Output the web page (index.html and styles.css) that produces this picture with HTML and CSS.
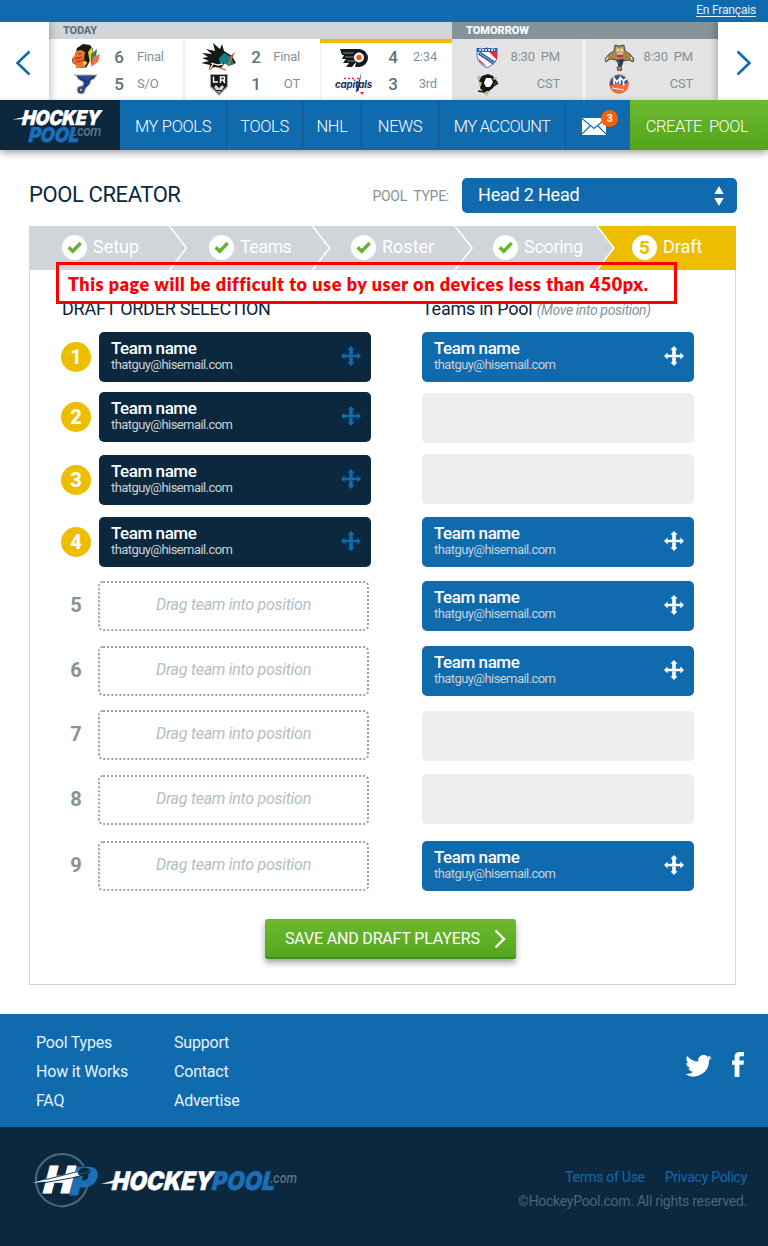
FILE: index.html
```html
<!DOCTYPE html>
<html lang="en">
<head>
<meta charset="utf-8">
<title>Pool Creator - HockeyPool.com</title>
<link rel="stylesheet" href="styles.css">
</head>
<body>
<svg class="defs" width="0" height="0">
  <symbol id="move" viewBox="0 0 20 20">
    <path d="M10 0l3.600 3.800h-1.800V9H8.200V3.800H6.400zM10 20l3.600-3.800h-1.800V11H8.200v5.200H6.400zM0 10l3.600-3.400v2.100h12.800V6.600L20 10l-3.600 3.400v-2.100H3.600v2.100z" fill="currentColor"/>
  </symbol>
  <symbol id="check" viewBox="0 0 25 25">
    <circle cx="12.500" cy="12.500" r="12.500" fill="#fff"/>
    <path d="M6.700 12.300l4 4 8-8.300" fill="none" stroke="#62b52c" stroke-width="3.400"/>
  </symbol>
</svg>

<div class="topbar"><a class="lang">En Français</a></div>

<section class="ticker">
  <div class="arrow arrow-left"><svg width="16" height="26" viewBox="0 0 16 26"><path d="M14.500 1.500L2.500 13l12 11.500" fill="none" stroke="#0f6aae" stroke-width="2.600"/></svg></div>
  <div class="day today">
    <h2>TODAY</h2>
    <div class="games">
      <div class="game g1">
        <div class="line">
          <svg class="team" viewBox="0 0 34 28"><path d="M9 5l6-4 7 1 3 4-2 10-5 9H9l-1-3-3-2-1-3 3-5z" fill="#171a16"/><path d="M8 8l5-1 4 2-1 7 2 9H8v-4l-4-1 1-3-1-2 3-3z" fill="#e37b28"/><path d="M20 9l4-5 1 8-3 8z" fill="#f1cc35"/><path d="M23 11l6-5-1 8-5 8z" fill="#2e8550"/><path d="M25 14l7-3-2 8-7 5z" fill="#ec7154"/><path d="M7 16l7-2M8 19l8-2M10 11h3" stroke="#d92d27" stroke-width="1.400"/><circle cx="17" cy="20" r="2" fill="#f3c635"/></svg>
          <b>6</b><span>Final</span>
        </div>
        <div class="line">
          <svg class="team" viewBox="0 0 34 28"><path d="M6 5h23l-3 4-3 1-1 4-4 4-1 2a4 4 0 1 1-4-4l3-1-1-3-5-3-1-3z" fill="#2c4598" stroke="#b8b08c" stroke-width="1"/><path d="M9 6l10 6 8-6M15 14l4 2" stroke="#162a67" fill="none"/><circle cx="13" cy="20" r="1.200" fill="#d6b456"/></svg>
          <b>5</b><span>S/O</span>
        </div>
      </div>
      <div class="game g2">
        <div class="line">
          <svg class="team" viewBox="0 0 34 28"><path d="M0 10l10 1-6-5 9 2-2-8 7 6 2-5 2 7 8 5 4 7-5 2-6-2-4 5-6-1-6 2 1-4-9-2 8-2-7-3 6-1z" fill="#14191b"/><path d="M17 15l5-5 7 4 3 7-5 2-5-3-4 0z" fill="#128087"/><path d="M33 9l-5 12-3 3 4-12z" fill="#bc6b34"/><path d="M9 20l7 2 5-1M8 26l3-5" stroke="#fff" stroke-width="1.300" fill="none"/><path d="M7 27l4-3M18 25l6 2" stroke="#e07832" stroke-width="1.500" fill="none"/></svg>
          <b>2</b><span>Final</span>
        </div>
        <div class="line">
          <svg class="team" viewBox="0 0 34 28"><path d="M8 4h18v13l-9 9-9-9z" fill="#a6abad"/><path d="M9 5h16v11l-8 8-8-8z" fill="#171819"/><path d="M11.500 6.500V12H16M18.500 13V7h4v3h-4M21 10l2 3" stroke="#fff" fill="none" stroke-width="1.400"/><path d="M12 17l2-2 3 3 3-3 2 2-2 3h-6zM15 21h4l-2 2z" fill="#d2d4d5"/></svg>
          <b>1</b><span>OT</span>
        </div>
      </div>
      <div class="game g3 live">
        <div class="line">
          <svg class="team" viewBox="0 0 34 28"><path d="M3 6h19a9 9 0 0 1 0 18h-4l1-5-4 5H9l3-4H6l3-4H5l2-4H5z" fill="#15181b"/><path d="M6 10h11M8 14h9M10 18h8" stroke="#84909a" stroke-width=".9"/><circle cx="22" cy="14.500" r="5" fill="#fff"/><circle cx="22" cy="14.500" r="2.700" fill="#f15a22"/></svg>
          <b>4</b><span>2:34</span>
        </div>
        <div class="line">
          <svg class="team wide" viewBox="0 0 38 28"><text x="0" y="18" textLength="37" lengthAdjust="spacingAndGlyphs" class="caps-mark">capitals</text><path d="M26.500 2l-6 20 3-1z" fill="#1d315c"/><path d="M9 8.500h2M13 8.500h2M17 8.500h2M22 8.500h2" stroke="#dc2741" stroke-width="1.700"/><path d="M25 22h4l-2 3z" fill="#dc2741"/></svg>
          <b>3</b><span>3rd</span>
        </div>
      </div>
    </div>
  </div>
  <div class="day tomorrow">
    <h2>TOMORROW</h2>
    <div class="games">
      <div class="game g4">
        <div class="line">
          <svg class="team" viewBox="0 0 34 28"><path d="M6 4l5 1 6-1 6 1 5-1v8c0 7-4 10-11 14C10 22 6 18 6 12z" fill="#2c5bb4" stroke="#f4f4f4"/><path d="M7.500 9h19v4c0 5-3 8-9.500 11.500C10 21 7.500 18 7.500 13z" fill="#fff"/><path d="M19 9h8v8z" fill="#e02c45"/><path d="M8 15l9 9-5-3-3-3z" fill="#d82d45"/><path d="M9 10l15 10" stroke="#2c5bb4" stroke-width="3.800"/><path d="M10 10.500l14 9.500" stroke="#dfe8f6" stroke-width="1" stroke-dasharray="1.500 1"/><path d="M9 7h16" stroke="#fff" stroke-width="1.500" stroke-dasharray="2 1"/></svg>
          <span>8:30&nbsp; PM</span>
        </div>
        <div class="line">
          <svg class="team" viewBox="0 0 34 28"><path d="M7 6l15 1 6 6-6 3-5 10-6-5z" fill="#c8b78b"/><path d="M12 6l6-2 5 2 2 3 3 3-4 2-1 4-4 3-6 0-3-3 2-5-3-2z" fill="#151719"/><path d="M16 8l5 0 2 4-3 5-4 0-2-4z" fill="#fff"/><path d="M8 21l6 1 14-9" stroke="#151719" stroke-width="1.600" fill="none"/><path d="M23 9l4-1" stroke="#d7bb70" stroke-width="1.500"/></svg>
          <span>CST</span>
        </div>
      </div>
      <div class="game g5">
        <div class="line">
          <svg class="team" viewBox="0 0 34 28"><path d="M13 2l4 1 5-1 1 6 5 3 4 5-1 3-4-2-6 1-1 4-1 2 1 3-4 1-1-3 2-3-3-5-6-1-4 3-1-3 4-5 5-3z" fill="#a78546" stroke="#273653" stroke-width=".8"/><path d="M14 4l3 1 4-1 1 5-4 3-4-3z" fill="#d1b36b"/><path d="M15 7h2M19 7h2" stroke="#fff" stroke-width="1.200"/><path d="M15 10.500h6v3.500h-6z" fill="#c92a42"/><path d="M15 11h6" stroke="#fff" stroke-width="1"/><path d="M6 14l-2 3M29 14l1 3" stroke="#fff" stroke-width="1"/><path d="M14 17l8-1-3 8-3-1 1-4z" fill="#21375f"/></svg>
          <span>8:30&nbsp; PM</span>
        </div>
        <div class="line">
          <svg class="team" viewBox="0 0 34 28"><circle cx="17" cy="14" r="9.300" fill="#1f56a0" stroke="#f26a35" stroke-width="1"/><path d="M8 16l6-3 6 2 6-3c0 5-2 11-9 11-4 0-8-3-9-7z" fill="#f26a35"/><path d="M12 14V8l3 4 3-4v6M19 8l2.500 3L25 8M21.500 11v5" stroke="#fff" stroke-width="1.700" fill="none"/><path d="M10 18l12 2" stroke="#fff" stroke-width="1"/></svg>
          <span>CST</span>
        </div>
      </div>
    </div>
  </div>
  <div class="arrow arrow-right"><svg width="16" height="26" viewBox="0 0 16 26"><path d="M1.500 1.500l12 11.500-12 11.500" fill="none" stroke="#0f6aae" stroke-width="2.600"/></svg></div>
</section>

<nav class="nav">
  <a class="brand"><svg width="120" height="50" viewBox="0 0 120 50">
    <g transform="skewX(-5)"><text class="logo-text white" x="24" y="25" font-size="20.500" textLength="78" lengthAdjust="spacingAndGlyphs">HOCKEY</text>
    <text class="logo-text blue" x="32" y="42" font-size="20.500" textLength="50" lengthAdjust="spacingAndGlyphs">POOL</text></g>
    <path d="M12 19.500l20-4-2 3.500z" fill="#fff"/>
    <text class="logo-com" x="74" y="36" font-size="14" textLength="27" lengthAdjust="spacingAndGlyphs">.com</text>
  </svg></a>
  <a class="n1">MY POOLS</a><a class="n2">TOOLS</a><a class="n3">NHL</a><a class="n4">NEWS</a><a class="n5">MY ACCOUNT</a>
  <a class="mail"><svg width="24" height="17" viewBox="0 0 24 17"><path d="M0 0h24v17H0z" fill="#fff"/><path d="M0 .5l12 10 12-10M0 16l8.500-8.500M24 16l-8.500-8.500" fill="none" stroke="#0f6aae" stroke-width="1.200"/></svg><i class="badge">3</i></a>
  <a class="create">CREATE&nbsp; POOL</a>
</nav>

<main class="main">
  <header class="head">
    <h1>POOL CREATOR</h1>
    <span class="label">POOL&nbsp; TYPE:</span>
    <div class="select"><span>Head 2 Head</span><svg width="10" height="20" viewBox="0 0 10 20"><path d="M5 0l4.700 8H.3zM5 20l4.700-8H.3z" fill="#fff"/></svg></div>
  </header>

  <section class="panel">
    <div class="steps">
      <svg class="chevrons" width="707" height="44" viewBox="0 0 707 44"><path d="M568 0h139v44H568l16-22z" fill="#edbe00"/><path d="M140.500 0l17 22-17 22M283.500 0l17 22-17 22M426 0l17 22-17 22M568 0l17 22-17 22" fill="none" stroke="#fff" stroke-width="1.600"/></svg>
      <div class="step s1"><svg><use href="#check"/></svg><span>Setup</span></div>
      <div class="step s2"><svg><use href="#check"/></svg><span>Teams</span></div>
      <div class="step s3"><svg><use href="#check"/></svg><span>Roster</span></div>
      <div class="step s4"><svg><use href="#check"/></svg><span>Scoring</span></div>
      <div class="step s5"><b>5</b><span>Draft</span></div>
    </div>
    <p class="note"><span>This page will be difficult to use by user on devices less than 450px.</span></p>
    <div class="columns">
      <div class="col">
        <h3 class="h-order">DRAFT ORDER SELECTION</h3>
        <ol class="order">
          <li><b class="num on">1</b><div class="card dark"><div><strong>Team name</strong><small>thatguy@hisemail.com</small></div><svg class="move"><use href="#move"/></svg></div></li>
          <li><b class="num on">2</b><div class="card dark"><div><strong>Team name</strong><small>thatguy@hisemail.com</small></div><svg class="move"><use href="#move"/></svg></div></li>
          <li><b class="num on">3</b><div class="card dark"><div><strong>Team name</strong><small>thatguy@hisemail.com</small></div><svg class="move"><use href="#move"/></svg></div></li>
          <li><b class="num on">4</b><div class="card dark"><div><strong>Team name</strong><small>thatguy@hisemail.com</small></div><svg class="move"><use href="#move"/></svg></div></li>
          <li><b class="num">5</b><div class="slot">Drag team into position</div></li>
          <li><b class="num">6</b><div class="slot">Drag team into position</div></li>
          <li><b class="num">7</b><div class="slot">Drag team into position</div></li>
          <li><b class="num">8</b><div class="slot">Drag team into position</div></li>
          <li><b class="num">9</b><div class="slot">Drag team into position</div></li>
        </ol>
      </div>
      <div class="col">
        <h3 class="h-pool">Teams in Pool <em>(Move into position)</em></h3>
        <div class="pool">
          <div class="card"><div><strong>Team name</strong><small>thatguy@hisemail.com</small></div><svg class="move"><use href="#move"/></svg></div>
          <div class="empty"></div>
          <div class="empty"></div>
          <div class="card"><div><strong>Team name</strong><small>thatguy@hisemail.com</small></div><svg class="move"><use href="#move"/></svg></div>
          <div class="card"><div><strong>Team name</strong><small>thatguy@hisemail.com</small></div><svg class="move"><use href="#move"/></svg></div>
          <div class="card"><div><strong>Team name</strong><small>thatguy@hisemail.com</small></div><svg class="move"><use href="#move"/></svg></div>
          <div class="empty"></div>
          <div class="empty"></div>
          <div class="card"><div><strong>Team name</strong><small>thatguy@hisemail.com</small></div><svg class="move"><use href="#move"/></svg></div>
        </div>
      </div>
    </div>
    <a class="save"><span>SAVE AND DRAFT PLAYERS</span><svg width="12" height="20" viewBox="0 0 12 20"><path d="M1.500 1.500l8.500 8.500-8.500 8.500" fill="none" stroke="#fff" stroke-width="2.400"/></svg></a>
  </section>
</main>

<footer>
  <div class="foot-links">
    <div class="link-col c1"><a>Pool Types</a><a>How it Works</a><a>FAQ</a></div>
    <div class="link-col c2"><a>Support</a><a>Contact</a><a>Advertise</a></div>
    <div class="social">
      <svg width="27" height="22" viewBox="0 0 24 20"><path d="M24 2.300a10 10 0 0 1-2.800.8A5 5 0 0 0 23.300.4a10 10 0 0 1-3.100 1.200A4.900 4.900 0 0 0 11.800 6 14 14 0 0 1 1.700.9a4.900 4.900 0 0 0 1.500 6.600A5 5 0 0 1 1 6.900a4.900 4.900 0 0 0 3.900 4.900 5 5 0 0 1-2.200.1 4.900 4.900 0 0 0 4.600 3.400A9.900 9.900 0 0 1 0 17.300 14 14 0 0 0 21.500 4.800 10 10 0 0 0 24 2.300z" fill="#fff"/></svg>
      <svg width="12" height="25" viewBox="0 0 12 25"><path d="M2.600 25V12.800H0V8.500h2.600V5.600C2.600 1.600 4.300 0 8 0h4v4.300H9.500c-1.800 0-2.100.6-2.100 2v2.200H12l-.5 4.300H7.400V25z" fill="#fff"/></svg>
    </div>
  </div>
  <div class="foot-bottom">
    <svg width="270" height="58" viewBox="0 0 270 58">
      <path d="M55.300 35A26 26 0 1 1 51.800 15" fill="none" stroke="#486673" stroke-width="2.200"/>
      <g transform="skewX(-5)">
      <text class="logo-text blue heavy" x="42" y="44.500" font-size="38" textLength="25" lengthAdjust="spacingAndGlyphs">P</text>
      <text class="logo-text white heavy" x="15" y="42" font-size="37" textLength="29" lengthAdjust="spacingAndGlyphs">H</text>
      <text class="logo-text white" x="83" y="39.500" font-size="25.500" textLength="101" lengthAdjust="spacingAndGlyphs">HOCKEY</text>
      <text class="logo-text blue" x="183" y="39.500" font-size="25.500" textLength="63" lengthAdjust="spacingAndGlyphs">POOL</text></g>
      <path d="M0 32L49 19l1 5-22 5z" fill="#fff"/><path d="M8 32.500l40-7M14 28.500l32-8" stroke="#0c283e" stroke-width=".9"/>
      <ellipse cx="52" cy="21" rx="6.500" ry="4" fill="#0c283e" transform="rotate(-12 52 21)"/><path d="M46 22q7 2 12-3" fill="none" stroke="#1b6fb8" stroke-width=".8"/>
      <path d="M69 33l17-5v4z" fill="#fff"/>
      <text class="logo-com" x="238" y="32" font-size="14" textLength="27" lengthAdjust="spacingAndGlyphs">.com</text>
    </svg>
    <div class="legal"><p><a>Terms of Use</a><a>Privacy Policy</a></p><p class="copy">©HockeyPool.com. All rights reserved.</p></div>
  </div>
</footer>
</body>
</html>
```
FILE: styles.css
```css
* { box-sizing: border-box; }
body { margin: 0; width: 768px; background: #fff; font-family: Roboto, "Noto Sans", sans-serif; color: #0c283e; }
h1, h2, h3, p, ol { margin: 0; padding: 0; font-weight: 400; }
.defs { position: absolute; }
svg { display: block; flex: none; }

.topbar { height: 22px; background: #0f6aae; display: flex; justify-content: flex-end; padding: 2px 12px 0 0; }
.lang { color: #e4eff8; font-size: 12px; line-height: 16px; letter-spacing: -.18px; text-decoration: underline; text-underline-offset: 2px; }

.ticker { display: flex; height: 78px; }
.arrow { width: 49px; display: flex; align-items: center; justify-content: center; padding-top: 4px; background: #fff; }
.arrow-left { padding-right: 3px; box-shadow: 1px 0 8px rgba(0,0,0,.3); clip-path: inset(0 -10px 0 0); z-index: 1; }
.arrow-right { width: 50px; padding-left: 2px; box-shadow: -1px 0 8px rgba(0,0,0,.3); clip-path: inset(0 0 0 -10px); z-index: 1; }
.day h2 { height: 17px; font-size: 11px; line-height: 18px; font-weight: 800; padding-left: 14px; letter-spacing: -.2px; }
.today { width: 403px; }
.today h2 { background: #cfd5d8; color: #5d727b; }
.tomorrow { width: 266px; background: #e3e3e3; }
.tomorrow h2 { background: #849499; color: #fff; letter-spacing: 0; }
.games { display: flex; height: 61px; }
.game { padding-top: 4px; border-left: 2px solid #eee; }
.g1 { width: 134px; padding-left: 17px; border-left: 2px solid transparent; --gap: 2px; }
.g2 { width: 137px; padding-left: 17px; --gap: 5px; }
.g3 { width: 132px; padding-left: 15px; --gap: 7px; }
.live { border-left: 0; padding-left: 17px; box-shadow: inset 0 4px #edbe00, inset 1px 0 #eee; }
.g4 { width: 131px; padding-left: 16px; border-color: #e3e3e3; }
.g5 { width: 135px; padding-left: 17px; border-color: #f4f4f4; }
.line { height: 27px; display: flex; align-items: center; font-size: 13px; letter-spacing: -.2px; color: #829399; }
.team { width: 34px; height: 28px; }
.team.wide { width: 38px; margin: 0 -2px; }
.line b { width: 30px; margin-left: var(--gap); text-align: center; font-size: 17px; font-weight: 500; color: #5d727b; }
.line span { width: 29px; text-align: right; white-space: nowrap; }
.g1 .line span { text-align: left; margin-left: 3px; }
.g4 .line span { width: 56px; }
.g5 .line span { width: 56px; margin-left: 1px; }
.caps-mark { font: italic 700 10px Inter, sans-serif; fill: #1d315c; }

.nav { height: 50px; display: flex; background: #0f6aae; box-shadow: 0 3px 7px rgba(0,0,0,.35); position: relative; z-index: 2; }
.nav a { display: flex; align-items: center; justify-content: center; padding-top: 2px; color: #fff; font-size: 16.500px; letter-spacing: -.35px; font-weight: 300; border-left: 1px solid #0b568f; white-space: nowrap; }
.nav .brand { width: 120px; background: #0c283e; border: 0; padding: 0; }
.nav .n1 { width: 106px; border: 0; }
.n2 { width: 76px; }
.n3 { width: 59px; }
.n4 { width: 77px; }
.nav .n5 { width: 127px; letter-spacing: -.65px; }
.nav .mail { width: 65px; position: relative; padding: 2px 8px 0 0; }
.badge { position: absolute; left: 35px; top: 10px; width: 17px; height: 17px; border-radius: 50%; background: #f56200; font: 700 11px/17px Roboto, sans-serif; text-align: center; }
.nav .create { flex: 1; background: linear-gradient(#6cb92d, #52a51c); border: 0; padding-right: 4px; letter-spacing: -.5px; }
.logo-text { font-family: Inter, sans-serif; font-weight: 900; font-style: italic; stroke-width: .4; }
.logo-text.white { fill: #fff; stroke: #fff; }
.logo-text.blue { fill: #1b6fb8; stroke: #1b6fb8; }
.logo-text.heavy { stroke-width: 1.2; }
.logo-com { font-family: Roboto, sans-serif; font-weight: 500; font-style: italic; fill: #587582; }

.main { padding: 28px 32px 29px 29px; height: 864px; }
.head { display: flex; align-items: center; height: 35px; width: 708px; }
.head h1 { font-size: 22px; line-height: 33px; letter-spacing: -.4px; flex: 1; padding-bottom: 2px; }
.label { font-size: 14px; letter-spacing: -.25px; color: #829399; margin-right: 13px; }
.select { width: 275px; height: 35px; border-radius: 5px; background: #0f6aae; color: #fff; display: flex; align-items: center; justify-content: space-between; padding: 0 13px 0 16px; font-size: 18px; letter-spacing: -.2px; }
.select span { padding-bottom: 2px; }

.panel { margin-top: 13px; width: 707px; height: 759px; border: 1px solid #cfd5d8; border-top: 0; position: relative; }
.steps { height: 44px; width: 707px; margin-left: -1px; background: #cfd5d8; display: flex; align-items: center; position: relative; }
.chevrons { position: absolute; left: 0; top: 0; }
.step { display: flex; align-items: center; gap: 6px; color: #fff; font-size: 18px; position: relative; padding-bottom: 1px; }
.step span { padding-bottom: 2px; }
.step svg, .step b { width: 25px; height: 25px; }
.step b { border-radius: 50%; background: #fff; color: #edbe00; text-align: center; font-size: 19px; line-height: 25px; font-weight: 800; }
.s1 { width: 147px; margin-left: 33px; }
.s2 { width: 142px; letter-spacing: -.6px; }
.s3 { width: 142px; }
.s4 { width: 139px; letter-spacing: -.3px; }
.note { position: absolute; left: 26px; top: 36px; width: 621px; height: 42px; border: 3px solid #f00; color: #f00; font: 800 18px/38px Lato, sans-serif; letter-spacing: .55px; padding-left: 9px; white-space: nowrap; z-index: 1; }

.columns { display: flex; height: 649px; }
.col { padding-left: 32px; width: 360px; }
.col + .col { width: 345px; }
.col h3 { height: 62px; padding-top: 28px; font-size: 18px; line-height: 22px; white-space: nowrap; letter-spacing: -.25px; }
.h-pool em { font-size: 14px; color: #829399; letter-spacing: -.35px; }
.order { list-style: none; display: grid; grid-template-rows: 60px 63px 62px 64px 65px 64px 65px 66px 50px; margin-left: -1px; }
.order li { display: flex; height: 50px; align-items: center; }
.num { width: 30px; height: 30px; margin: 0 7px 2px 0; text-align: center; line-height: 30px; font-size: 20px; font-weight: 700; color: #849499; }
.num.on { border-radius: 50%; background: #edbe00; color: #fff; font-weight: 800; margin-bottom: 0; }
.card { width: 272px; height: 50px; border-radius: 5px; background: #0f6aae; color: #fff; display: flex; justify-content: space-between; padding: 6px 10px 0 12px; }
.card.dark { background: #0c283e; }
.card strong { display: block; font-size: 17px; line-height: 20px; font-weight: 500; letter-spacing: -.45px; }
.card small { display: block; font-size: 13px; line-height: 14px; color: #c8d1d7; letter-spacing: -.57px; }
.move { width: 20px; height: 20px; margin-top: 8px; }
.dark .move { color: #0f6aae; }
.order .card { margin-left: 1px; }
.slot { width: 271px; height: 50px; border: 2px dotted #94a3aa; border-radius: 5px; display: flex; align-items: center; justify-content: center; font-style: italic; font-size: 16px; letter-spacing: -.27px; color: #b0c0c7; padding-bottom: 3px; }
.pool { display: grid; grid-template-rows: 61px 61px 63px 64px 65px 65px 63px 67px 50px; }
.empty { width: 272px; height: 50px; border-radius: 5px; background: #edeef0; }
.save { margin-left: 235px; width: 251px; height: 40px; border-radius: 3px; background: linear-gradient(#6cb92d, #52a51c); box-shadow: inset 0 -2px #3f8a21, 0 4px 6px rgba(0,0,0,.35); color: #fff; display: flex; align-items: center; justify-content: space-between; padding: 0 10px 0 20px; font-size: 16px; letter-spacing: -.17px; white-space: nowrap; }
.save span { padding-bottom: 1px; }

.foot-links { height: 113px; background: #0f6aae; display: flex; padding: 14px 24px 0 36px; }
.link-col { width: 138px; display: flex; flex-direction: column; color: #e8f2fa; font-size: 16px; line-height: 29px; letter-spacing: -.2px; }
.social { margin-left: auto; display: flex; align-items: flex-end; height: 49px; gap: 20px; }
.social svg:last-child { margin-bottom: 0; }
.foot-bottom { height: 119px; background: #0c283e; display: flex; justify-content: space-between; padding: 24px 21px 0 32px; }
.legal { text-align: right; padding-top: 14px; font-size: 14px; line-height: 24px; letter-spacing: -.28px; color: #486673; }
.legal a { color: #0f6aae; margin-left: 20px; }
```
